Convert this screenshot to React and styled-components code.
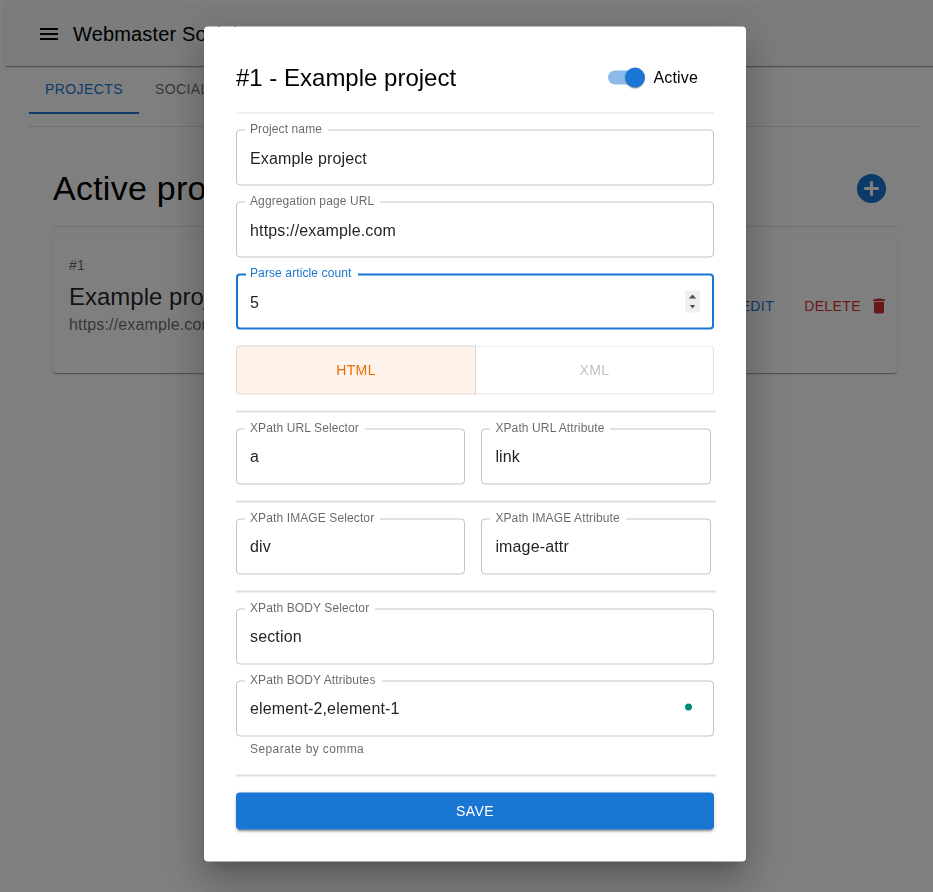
import React from "react";
import styled, { createGlobalStyle, css } from "styled-components";

const Global = createGlobalStyle`
  *, *::before, *::after { box-sizing: border-box; }
  html, body { margin: 0; height: 100%; overflow: hidden; background: #fff; }
  body { font-family: "Liberation Sans", Arial, sans-serif; color: rgba(0, 0, 0, 0.87); }
`;

const Page = styled.div`
  height: 892px;
  width: 933px;
  overflow: hidden;
  padding: 2px 0 0 5px;
`;

const AppBar = styled.header`
  display: flex;
  align-items: center;
  gap: 12px;
  width: 960px;
  height: 64px;
  padding-left: 32px;
  background: #f5f8fb;
  color: #000;
  box-shadow: 0 2px 1px -1px rgba(0, 0, 0, 0.2), 0 1px 1px rgba(0, 0, 0, 0.14), 0 1px 3px rgba(0, 0, 0, 0.12);
`;

const Brand = styled.div`
  font-size: 20px;
  line-height: 32px;
  letter-spacing: 0.15px;
`;

const Icon = styled.svg`
  display: block;
  flex: none;
  width: ${(p) => p.$size}px;
  height: ${(p) => p.$size}px;
  fill: currentColor;
`;

const Tabs = styled.nav`
  display: flex;
  height: 48px;
  margin-left: 24px;
`;

const Tab = styled.div`
  padding: 15px 16px 0;
  font-size: 14px;
  line-height: 17.5px;
  letter-spacing: 0.4px;
  text-transform: uppercase;
  color: ${(p) => (p.$selected ? "#1976d2" : "rgba(0,0,0,0.6)")};
  border-bottom: 2px solid ${(p) => (p.$selected ? "#1976d2" : "transparent")};
`;

const PageRule = styled.hr`
  height: 1px;
  margin: 12px 13px 0 24px;
  border: 0;
  background: rgba(0, 0, 0, 0.12);
`;

const Content = styled.main`
  width: 845px;
  margin: 40px 0 0 48px;
`;

const HeadingRow = styled.div`
  display: flex;
  justify-content: space-between;
  align-items: center;
  height: 42px;
  padding-right: 9px;
`;

const Heading = styled.h1`
  margin: 0;
  font-weight: 400;
  font-size: 34px;
  line-height: 42px;
  letter-spacing: 0.25px;
  color: #000;
`;

const AddButton = styled.div`
  color: #1976d2;
`;

const HeadingRule = styled.hr`
  height: 1px;
  margin: 17px 1px 11px 0;
  border: 0;
  background: rgba(0, 0, 0, 0.12);
`;

const Card = styled.section`
  display: flex;
  justify-content: space-between;
  align-items: center;
  width: 844px;
  height: 135px;
  padding: 0 8px 0 16px;
  border-radius: 4px;
  background: #fff;
  box-shadow: 0 2px 1px -1px rgba(0, 0, 0, 0.2), 0 1px 1px rgba(0, 0, 0, 0.14), 0 1px 3px rgba(0, 0, 0, 0.12);
`;

const CardInfo = styled.div`
  align-self: flex-start;
  padding-top: 17px;
`;

const CardId = styled.div`
  font-size: 14px;
  line-height: 21px;
  letter-spacing: 0.13px;
  color: rgba(0, 0, 0, 0.6);
`;

const CardTitle = styled.div`
  margin-top: 5px;
  font-size: 24px;
  line-height: 32px;
`;

const CardUrl = styled.div`
  font-size: 16px;
  line-height: 24px;
  letter-spacing: 0.15px;
  color: rgba(0, 0, 0, 0.6);
`;

const CardActions = styled.div`
  display: flex;
  gap: 30px;
`;

const CardAction = styled.div`
  display: flex;
  align-items: center;
  gap: 8px;
  font-size: 14px;
  line-height: 24px;
  letter-spacing: 0.4px;
  color: ${(p) => p.$color};
`;

const Backdrop = styled.div`
  position: fixed;
  inset: 0;
  background: rgba(0, 0, 0, 0.5);
`;

const Dialog = styled.div`
  position: fixed;
  left: 475px;
  top: 444px;
  width: 542px;
  height: 835px;
  transform: translate(-50%, -50%);
  padding: 32px;
  border-radius: 4px;
  background: #fff;
  box-shadow: 0 11px 15px -7px rgba(0, 0, 0, 0.2), 0 24px 38px 3px rgba(0, 0, 0, 0.14), 0 9px 46px 8px rgba(0, 0, 0, 0.12);
`;

const DialogHead = styled.div`
  display: flex;
  justify-content: space-between;
  align-items: center;
  height: 38px;
  padding-right: 16px;
  color: #000;
`;

const DialogTitle = styled.h2`
  margin: 0;
  font-weight: 400;
  font-size: 24px;
  line-height: 32px;
`;

const SwitchLabel = styled.label`
  display: flex;
  align-items: center;
  gap: 9px;
  font-size: 16px;
  letter-spacing: 0.15px;
`;

const Track = styled.span`
  display: flex;
  justify-content: flex-end;
  align-items: center;
  width: 34px;
  height: 14px;
  margin-right: 3px;
  border-radius: 7px;
  background: #8cbae8;
`;

const Thumb = styled.span`
  flex: none;
  width: 20px;
  height: 20px;
  margin-right: -3px;
  border-radius: 50%;
  background: #1976d2;
  box-shadow: 0 2px 1px -1px rgba(0, 0, 0, 0.2), 0 1px 1px rgba(0, 0, 0, 0.14), 0 1px 3px rgba(0, 0, 0, 0.12);
`;

const HeadRule = styled.hr`
  height: 1px;
  margin: 16px 0;
  border: 0;
  background: rgba(0, 0, 0, 0.12);
`;

const Rule = styled.hr`
  height: 2px;
  margin: 16px -2px 16px 0;
  border: 0;
  background: rgba(0, 0, 0, 0.12);
`;

const Stack = styled.div`
  display: flex;
  flex-direction: column;
  gap: 16px;
`;

const Pair = styled.div`
  display: grid;
  grid-template-columns: 229.4px 229.4px;
  gap: 16px;
`;

const Outline = styled.fieldset`
  display: block;
  min-width: 0;
  height: 61px;
  margin: -5px 0 0;
  padding: 0 8px;
  border: 1px solid rgba(0, 0, 0, 0.23);
  border-radius: 4px;
  ${(p) => p.$focused && css`
    border: 2px solid #1976d2;
  `}
`;

const Legend = styled.legend`
  height: 11px;
  padding: 0 ${(p) => (p.$focused ? "7px 0 4px" : "6px 0 5px")};
  font-size: 12px;
  line-height: 9px;
  letter-spacing: 0.11px;
  color: ${(p) => (p.$focused ? "#1976d2" : "rgba(0,0,0,0.6)")};
`;

const InputRow = styled.div`
  display: flex;
  align-items: center;
  height: 44.5px;
  padding: 0 ${(p) => (p.$focused ? "4px" : "5px")};
`;

const Input = styled.input`
  flex: 1;
  min-width: 0;
  height: 23px;
  padding: 0;
  border: 0;
  outline: 0;
  background: none;
  font: 16px/23px "Liberation Sans", Arial, sans-serif;
  letter-spacing: 0.15px;
  color: rgba(0, 0, 0, 0.87);
`;

const Spinner = styled.svg`
  flex: none;
  width: 15px;
  height: 22px;
  background: #efefef;
  fill: #505050;
`;

const StatusDot = styled.span`
  width: 7px;
  height: 7px;
  margin: 0 8px 3px 0;
  border-radius: 50%;
  background: #008c78;
`;

const Helper = styled.div`
  margin: 2px 14px 0;
  font-size: 12px;
  line-height: 20px;
  letter-spacing: 0.4px;
  color: rgba(0, 0, 0, 0.6);
`;

const ToggleGroup = styled.div`
  display: flex;
  height: 48.5px;
`;

const Toggle = styled.div`
  flex: ${(p) => (p.$selected ? "0 0 240px" : "1")};
  display: flex;
  align-items: center;
  justify-content: center;
  font-size: 14px;
  letter-spacing: 0.4px;
  border: 1px solid rgba(0, 0, 0, 0.12);
  border-radius: ${(p) => (p.$selected ? "4px 0 0 4px" : "0 4px 4px 0")};
  border-left-width: ${(p) => (p.$selected ? 1 : 0)}px;
  color: ${(p) => (p.$selected ? "#ed6c02" : "rgba(0,0,0,0.26)")};
  background: ${(p) => (p.$selected ? "rgba(237,108,2,0.08)" : "transparent")};
`;

const SaveButton = styled.button`
  display: block;
  width: 100%;
  height: 37px;
  padding: 0;
  border: 0;
  border-radius: 4px;
  background: #1976d2;
  color: #fff;
  font: 14px/24px "Liberation Sans", Arial, sans-serif;
  letter-spacing: 0.4px;
  box-shadow: 0 3px 1px -2px rgba(0, 0, 0, 0.2), 0 2px 2px rgba(0, 0, 0, 0.14), 0 1px 5px rgba(0, 0, 0, 0.12);
`;

function Field({ label, value, stepper, focused, dot }) {
  return (
    <Outline $focused={focused}>
      <Legend $focused={focused}>{label}</Legend>
      <InputRow $focused={focused}>
        <Input defaultValue={value} aria-label={label} />
        {stepper && (
          <Spinner viewBox="0 0 15 22">
            <path d="M7.5 4L11.2 8H3.8zM7.5 18L4.8 14.5H10.2z" />
          </Spinner>
        )}
        {dot && <StatusDot />}
      </InputRow>
    </Outline>
  );
}

export default function App() {
  return (
    <>
      <Global />
      <Page>
        <AppBar>
          <Icon $size={24} viewBox="0 0 24 24">
            <path d="M3 18h18v-2H3v2zm0-5h18v-2H3v2zm0-7v2h18V6H3z" />
          </Icon>
          <Brand>Webmaster Social</Brand>
        </AppBar>
        <Tabs>
          <Tab $selected>Projects</Tab>
          <Tab>Social</Tab>
        </Tabs>
        <PageRule />
        <Content>
          <HeadingRow>
            <Heading>Active projects</Heading>
            <AddButton>
              <Icon $size={35} viewBox="0 0 24 24">
                <path d="M12 2C6.48 2 2 6.48 2 12s4.48 10 10 10 10-4.48 10-10S17.52 2 12 2zm5 11h-4v4h-2v-4H7v-2h4V7h2v4h4v2z" />
              </Icon>
            </AddButton>
          </HeadingRow>
          <HeadingRule />
          <Card>
            <CardInfo>
              <CardId>#1</CardId>
              <CardTitle>Example project</CardTitle>
              <CardUrl>https://example.com</CardUrl>
            </CardInfo>
            <CardActions>
              <CardAction $color="#1976d2">EDIT</CardAction>
              <CardAction $color="#d32f2f">
                DELETE
                <Icon $size={20} viewBox="0 0 24 24">
                  <path d="M6 19c0 1.1.9 2 2 2h8c1.1 0 2-.9 2-2V7H6v12zM19 4h-3.5l-1-1h-5l-1 1H5v2h14V4z" />
                </Icon>
              </CardAction>
            </CardActions>
          </Card>
        </Content>
      </Page>
      <Backdrop />
      <Dialog>
        <DialogHead>
          <DialogTitle>#1 - Example project</DialogTitle>
          <SwitchLabel>
            <Track>
              <Thumb />
            </Track>
            Active
          </SwitchLabel>
        </DialogHead>
        <HeadRule />
        <Stack>
          <Field label="Project name" value="Example project" />
          <Field label="Aggregation page URL" value="https://example.com" />
          <Field label="Parse article count" value="5" stepper focused />
          <ToggleGroup>
            <Toggle $selected>HTML</Toggle>
            <Toggle>XML</Toggle>
          </ToggleGroup>
        </Stack>
        <Rule />
        <Pair>
          <Field label="XPath URL Selector" value="a" />
          <Field label="XPath URL Attribute" value="link" />
        </Pair>
        <Rule />
        <Pair>
          <Field label="XPath IMAGE Selector" value="div" />
          <Field label="XPath IMAGE Attribute" value="image-attr" />
        </Pair>
        <Rule />
        <Stack>
          <Field label="XPath BODY Selector" value="section" />
          <Field label="XPath BODY Attributes" value="element-2,element-1" dot />
        </Stack>
        <Helper>Separate by comma</Helper>
        <Rule />
        <SaveButton>SAVE</SaveButton>
      </Dialog>
    </>
  );
}
